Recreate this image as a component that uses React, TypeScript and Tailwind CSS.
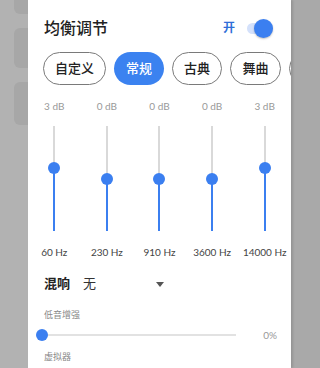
const presets = [
  { label: '自定义', w: 'w-[63px]', active: false },
  { label: '常规', w: 'w-[50px]', active: true },
  { label: '古典', w: 'w-[50px]', active: false },
  { label: '舞曲', w: 'w-[51px]', active: false },
  // only the edge of the next chip peeks in at the dialog border
  { label: '', w: 'w-[50px]', active: false },
];

const bands = [
  { hz: '60 Hz', db: 3 },
  { hz: '230 Hz', db: 0 },
  { hz: '910 Hz', db: 0 },
  { hz: '3600 Hz', db: 0 },
  { hz: '14000 Hz', db: 3 },
];

const TRACK_H = 105;

function BandSlider({ db }: { db: number }) {
  // range -15..+15 dB mapped to the track height
  const y = Math.round(TRACK_H / 2 - (db / 30) * TRACK_H);
  return (
    <div className="relative h-[105px] w-[12px]">
      <div className="absolute left-[5px] top-0 h-full w-[2px] bg-[#d9d9d9]" />
      <div className="absolute left-[5px] bottom-0 w-[2px] bg-[#3b7ff0]" style={{ top: y }} />
      <div
        className="absolute left-0 h-[12px] w-[12px] rounded-full bg-[#3b7ff0]"
        style={{ top: y - 6 }}
      />
    </div>
  );
}

export default function App() {
  return (
    <div
      className="flex h-[368px] w-[320px] overflow-hidden bg-[#b2b2b2]"
      style={{ fontFamily: 'Lato, "Noto Sans CJK SC", sans-serif' }}
    >
      {/* backdrop cards behind the dialog */}
      <div className="flex w-[28px] shrink-0 flex-col pl-[14px]">
        <div className="-mt-2 h-[22px] rounded-l-md bg-[#a7a7a7]" />
        <div className="mt-[14px] h-[40px] rounded-l-md bg-[#a7a7a7]" />
        <div className="mt-[14px] h-[43px] rounded-l-md bg-[#a7a7a7]" />
      </div>

      <div className="relative z-10 h-full w-[263px] shrink-0 overflow-hidden bg-white shadow-[2px_0_2px_rgba(0,0,0,0.12)]">
        <div className="mt-[10px] flex h-9 items-center justify-between pl-4 pr-[18px]">
          <div className="text-[16px] font-medium text-[#222]">均衡调节</div>
          <div className="flex items-center">
            <span className="mr-[12px] text-[12px] font-bold text-[#2f6fd8]">开</span>
            <div className="relative h-[11px] w-[26px] rounded-full bg-[#d4e1fb]">
              <div className="absolute -top-[4px] right-0 h-[19px] w-[19px] rounded-full bg-[#3b7ff0] shadow-[0_1px_2px_rgba(0,0,0,0.25)]" />
            </div>
          </div>
        </div>

        <div className="mt-[6px] flex gap-2 pl-[15px]">
          {presets.map((p, i) => (
            <div
              key={i}
              className={`flex h-[33px] shrink-0 items-center justify-center rounded-full text-[13px] font-medium ${p.w} ${
                p.active ? 'bg-[#3b82f0] text-white' : 'border border-[#7a7a7a] text-[#222]'
              }`}
            >
              {p.label}
            </div>
          ))}
        </div>

        <div className="mt-[14px] grid grid-cols-5">
          {bands.map((b) => (
            <div key={b.hz} className="flex flex-col items-center">
              <div className="flex h-[14px] items-center text-[10px] text-[#999]">{b.db} dB</div>
              <div className="mt-[13px]">
                <BandSlider db={b.db} />
              </div>
              <div className="mt-[14px] flex h-[14px] items-center whitespace-nowrap text-[10px] text-[#444]">{b.hz}</div>
            </div>
          ))}
        </div>

        <div className="mt-[15px] flex h-5 items-center pl-4">
          <span className="text-[13px] font-bold text-[#222]">混响</span>
          <span className="ml-[13px] text-[13px] text-[#333]">无</span>
          <span className="ml-[60px] h-0 w-0 border-x-[4px] border-t-[5px] border-x-transparent border-t-[#555]" />
        </div>

        <div className="mt-[14px] flex h-[14px] items-center pl-4 text-[9px] text-[#888]">低音增强</div>
        <div className="mt-[7px] flex h-3 items-center pl-[8px] pr-[14px]">
          <div className="relative h-3 w-[200px]">
            <div className="absolute left-[6px] right-0 top-[5px] h-[2px] bg-[#e2e2e2]" />
            <div className="absolute left-0 top-0 h-3 w-3 rounded-full bg-[#3b7ff0]" />
          </div>
          <span className="ml-auto text-[10px] text-[#999]">0%</span>
        </div>
        <div className="mt-[9px] flex h-[14px] items-center pl-4 text-[9px] text-[#888]">虚拟器</div>
      </div>

      <div className="h-full flex-1 bg-[#a9a9a9]" />
    </div>
  );
}
